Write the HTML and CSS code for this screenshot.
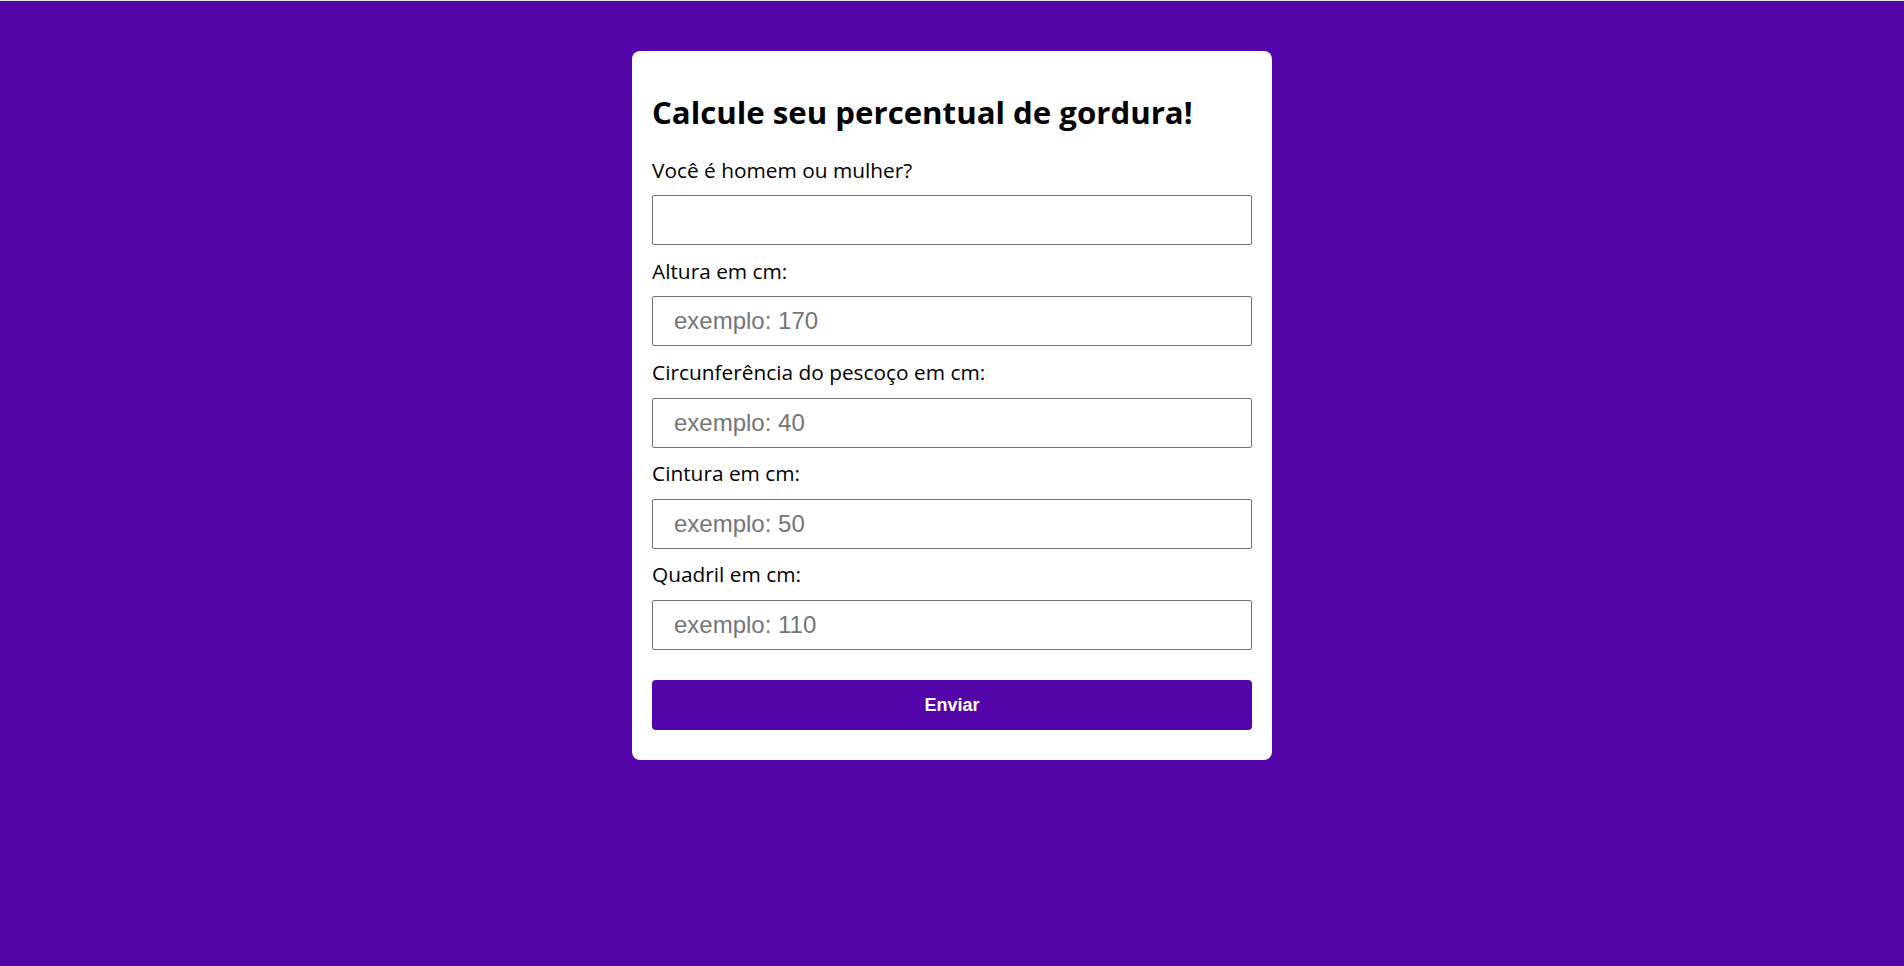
FILE: index.html
```html
<!DOCTYPE html>
<html lang="pt-BR">
<head>
<meta charset="utf-8">
<title>Calcule seu percentual de gordura</title>
<link rel="stylesheet" href="styles.css">
</head>
<body>
<main class="page">
  <form class="card">
    <h1 class="title">Calcule seu percentual de gordura!</h1>
    <label class="label" for="sexo">Você é homem ou mulher?</label>
    <input class="field" id="sexo" type="text">
    <label class="label" for="altura">Altura em cm:</label>
    <input class="field" id="altura" type="text" placeholder="exemplo: 170">
    <label class="label" for="pescoco">Circunferência do pescoço em cm:</label>
    <input class="field" id="pescoco" type="text" placeholder="exemplo: 40">
    <label class="label" for="cintura">Cintura em cm:</label>
    <input class="field" id="cintura" type="text" placeholder="exemplo: 50">
    <label class="label" for="quadril">Quadril em cm:</label>
    <input class="field" id="quadril" type="text" placeholder="exemplo: 110">
    <button class="submit" type="button">Enviar</button>
  </form>
</main>
</body>
</html>
```

FILE: styles.css
```css
html, body {
  margin: 0;
  padding: 0;
}

body {
  background: #5305a9;
  border-top: 1px solid #e2e2e2;
  min-height: 965px;
  font-family: "Open Sans", "Liberation Sans", sans-serif;
}

.page {
  display: flex;
  justify-content: center;
  padding-top: 50px;
}

.card {
  width: 640px;
  box-sizing: border-box;
  background: #ffffff;
  border-radius: 8px;
  padding: 12px 20px 30px;
  display: flex;
  flex-direction: column;
}

.title {
  margin: 27.6px 0 11px;
  font-size: 31.2px;
  font-weight: 700;
  color: #000;
  line-height: 1.362;
}

.label {
  display: block;
  margin-top: 11.6px;
  margin-bottom: 11px;
  font-size: 20.85px;
  line-height: 1.372;
  color: #000;
}

.field {
  display: block;
  box-sizing: border-box;
  width: 100%;
  height: 50px;
  margin: 0;
  padding: 0 21px;
  border: 1px solid #767676;
  border-radius: 2px;
  background: #fff;
  font-family: "Liberation Sans", Arial, sans-serif;
  font-size: 24px;
  color: #000;
  outline: none;
}

.field::placeholder {
  color: #757575;
}

.submit {
  margin-top: 30px;
  height: 50px;
  width: 100%;
  border: none;
  border-radius: 4px;
  background: #5305a9;
  color: #fff;
  font-family: "Liberation Sans", Arial, sans-serif;
  font-size: 18px;
  font-weight: 700;
  cursor: pointer;
}
```
